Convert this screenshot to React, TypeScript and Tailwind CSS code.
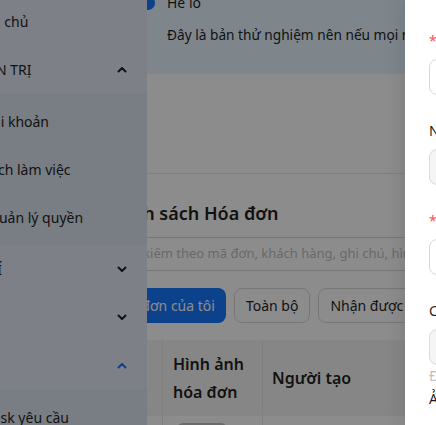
import React from "react";

function Chevron({ up, className = "" }: { up?: boolean; className?: string }) {
  return (
    <svg width="10" height="7" viewBox="0 0 10 7" className={className}>
      <path
        d={up ? "M1.5 5.5 L5 2 L8.5 5.5" : "M1.5 1.5 L5 5 L8.5 1.5"}
        fill="none"
        stroke="currentColor"
        strokeWidth="2"
        strokeLinecap="round"
        strokeLinejoin="round"
      />
    </svg>
  );
}

const topItem = "flex h-[48px] items-center justify-between pr-[20px] text-[14px] text-[#1f1f1f] whitespace-nowrap";
const subItem = "flex h-[48px] items-center pl-[0px] text-[14px] text-[#1f1f1f] whitespace-nowrap";

function Sidebar() {
  return (
    <aside className="w-[147px] shrink-0 overflow-hidden bg-[#e4ebf6]">
      <div className="-mt-[3px]">
        <div className={topItem}>
          <span className="-ml-[37px]">Trang chủ</span>
        </div>
        <div className={topItem}>
          <span className="-ml-[34px]">QUẢN TRỊ</span>
          <Chevron up className="text-[#1f1f1f]" />
        </div>
        <div className="bg-[#dde5f1] py-[4px]">
          <div className={subItem}>
            <span className="-ml-[14px]">Tài khoản</span>
          </div>
          <div className={subItem}>
            <span className="-ml-[13px]">Lịch làm việc</span>
          </div>
          <div className={subItem}>
            <span className="-ml-[12px]">Quản lý quyền</span>
          </div>
        </div>
        <div className={topItem}>
          <span className="-ml-[100px] w-[102px] text-right">THU CHÍ</span>
          <Chevron className="text-[#1f1f1f]" />
        </div>
        <div className={topItem}>
          <span className="-ml-[120px]">Đơn</span>
          <Chevron className="text-[#1f1f1f]" />
        </div>
        <div className={topItem}>
          <span className="-ml-[120px]">Hóa</span>
          <Chevron up className="text-[#1677ff]" />
        </div>
        <div className="bg-[#dde5f1] py-[4px]">
          <div className={subItem}>
            <span className="-ml-[14px]">Task yêu cầu</span>
          </div>
        </div>
      </div>
    </aside>
  );
}

function Main() {
  return (
    <main className="min-w-0 flex-1 overflow-hidden bg-white">
      {/* alert */}
      <div className="-mt-[20px] flex gap-[6px] bg-[#e6f4ff] pb-[28px] pt-[12px] text-[#1f1f1f]">
        <div className="flex h-[22px] w-[14px] shrink-0 items-center">
          <div className="-ml-[6px] h-[14px] w-[14px] shrink-0 rounded-full bg-[#1677ff]" />
        </div>
        <div className="whitespace-nowrap">
          <div className="text-[14px] leading-[22px]">Hé lô</div>
          <div className="mt-[10px] text-[13.7px] leading-[22px]">
            Đây là bản thử nghiệm nên nếu mọi người thấy lỗi vui lòng báo lại
          </div>
        </div>
      </div>

      <div className="h-[100px] border-b border-[#e8e8e8]" />

      {/* list card */}
      <div className="-ml-[42px] w-[520px]">
        <div className="ml-[3px] mt-[25px] text-[18px] font-semibold leading-[28px] text-[#1f1f1f]">
          Danh sách Hóa đơn
        </div>
        <div className="mt-[10px] flex h-[34px] items-center rounded-[6px] border border-[#d9d9d9] px-[11px] text-[13px] text-[#bfbfbf] whitespace-nowrap">
          Tìm kiếm theo mã đơn, khách hàng, ghi chú, hình thức
        </div>
        <div className="-ml-[5px] mt-[17px] flex gap-[8px] text-[14px] whitespace-nowrap">
          <div className="flex h-[35px] items-center rounded-[8px] bg-[#1677ff] px-[11px] text-white">
            Hóa đơn của tôi
          </div>
          <div className="flex h-[35px] items-center rounded-[8px] border border-[#d9d9d9] px-[11px] text-[#1f1f1f]">
            Toàn bộ
          </div>
          <div className="flex h-[35px] items-center rounded-[8px] border border-[#d9d9d9] px-[11px] text-[#1f1f1f]">
            Nhận được thanh toán
          </div>
        </div>
        <div className="mt-[17px] text-[16px] font-semibold text-[#1f1f1f]">
          <div className="flex h-[76px] border-b border-[#f0f0f0] bg-[#f5f5f5]">
            <div className="w-[58px] border-r border-[#e8e8e8]" />
            <div className="flex w-[100px] items-center border-r border-[#e8e8e8] px-[10px] leading-[28px]">
              Hình ảnh
              <br />
              hóa đơn
            </div>
            <div className="flex items-center px-[9px]">Người tạo</div>
          </div>
          <div className="flex h-[60px] bg-white">
            <div className="w-[58px] border-r border-[#e8e8e8]" />
            <div className="w-[100px] border-r border-[#e8e8e8] px-[14px] pt-[7px]">
              <div className="h-[40px] w-[50px] rounded-[6px] bg-[#c4c4c4]" />
            </div>
          </div>
        </div>
      </div>
    </main>
  );
}

function Field({ label, required, disabled }: { label: string; required?: boolean; disabled?: boolean }) {
  return (
    <div className="mb-[24px]">
      <div className="flex h-[22px] items-center whitespace-nowrap text-[14px] text-[#1f1f1f]">
        {required && <span className="mr-[4px] text-[#ff4d4f]">*</span>}
        {label}
      </div>
      <div
        className={`mt-[8px] h-[36px] rounded-[8px] border border-[#d9d9d9] ${disabled ? "bg-[#f5f5f5]" : "bg-white"}`}
      />
    </div>
  );
}

export default function App() {
  return (
    <div className="relative h-[425px] w-[436px] overflow-hidden bg-white font-['Noto_Sans',sans-serif]">
      <div className="flex h-full">
        <Sidebar />
        <Main />
      </div>

      {/* overlay */}
      <div className="absolute inset-0 bg-black/45" />

      {/* drawer */}
      <div className="absolute left-[405px] top-0 h-full w-[480px] bg-white pl-[24px] pt-[29px] shadow-[-6px_0_16px_rgba(0,0,0,0.08)]">
        <Field label="Khách hàng" required />
        <Field label="Người tạo" disabled />
        <Field label="Số tiền" required />
        <div>
          <div className="flex h-[22px] items-center whitespace-nowrap text-[14px] text-[#1f1f1f]">Chi nhánh</div>
          <div className="mt-[8px] h-[36px] rounded-[8px] border border-[#d9d9d9] bg-[#f5f5f5]" />
          <div className="h-[22px] whitespace-nowrap text-[14px] leading-[22px] text-[#bfbfbf]">Để trống nếu không có</div>
          <div className="flex h-[22px] items-center whitespace-nowrap text-[14px] text-[#1f1f1f]">Ảnh hóa đơn</div>
        </div>
      </div>
    </div>
  );
}
